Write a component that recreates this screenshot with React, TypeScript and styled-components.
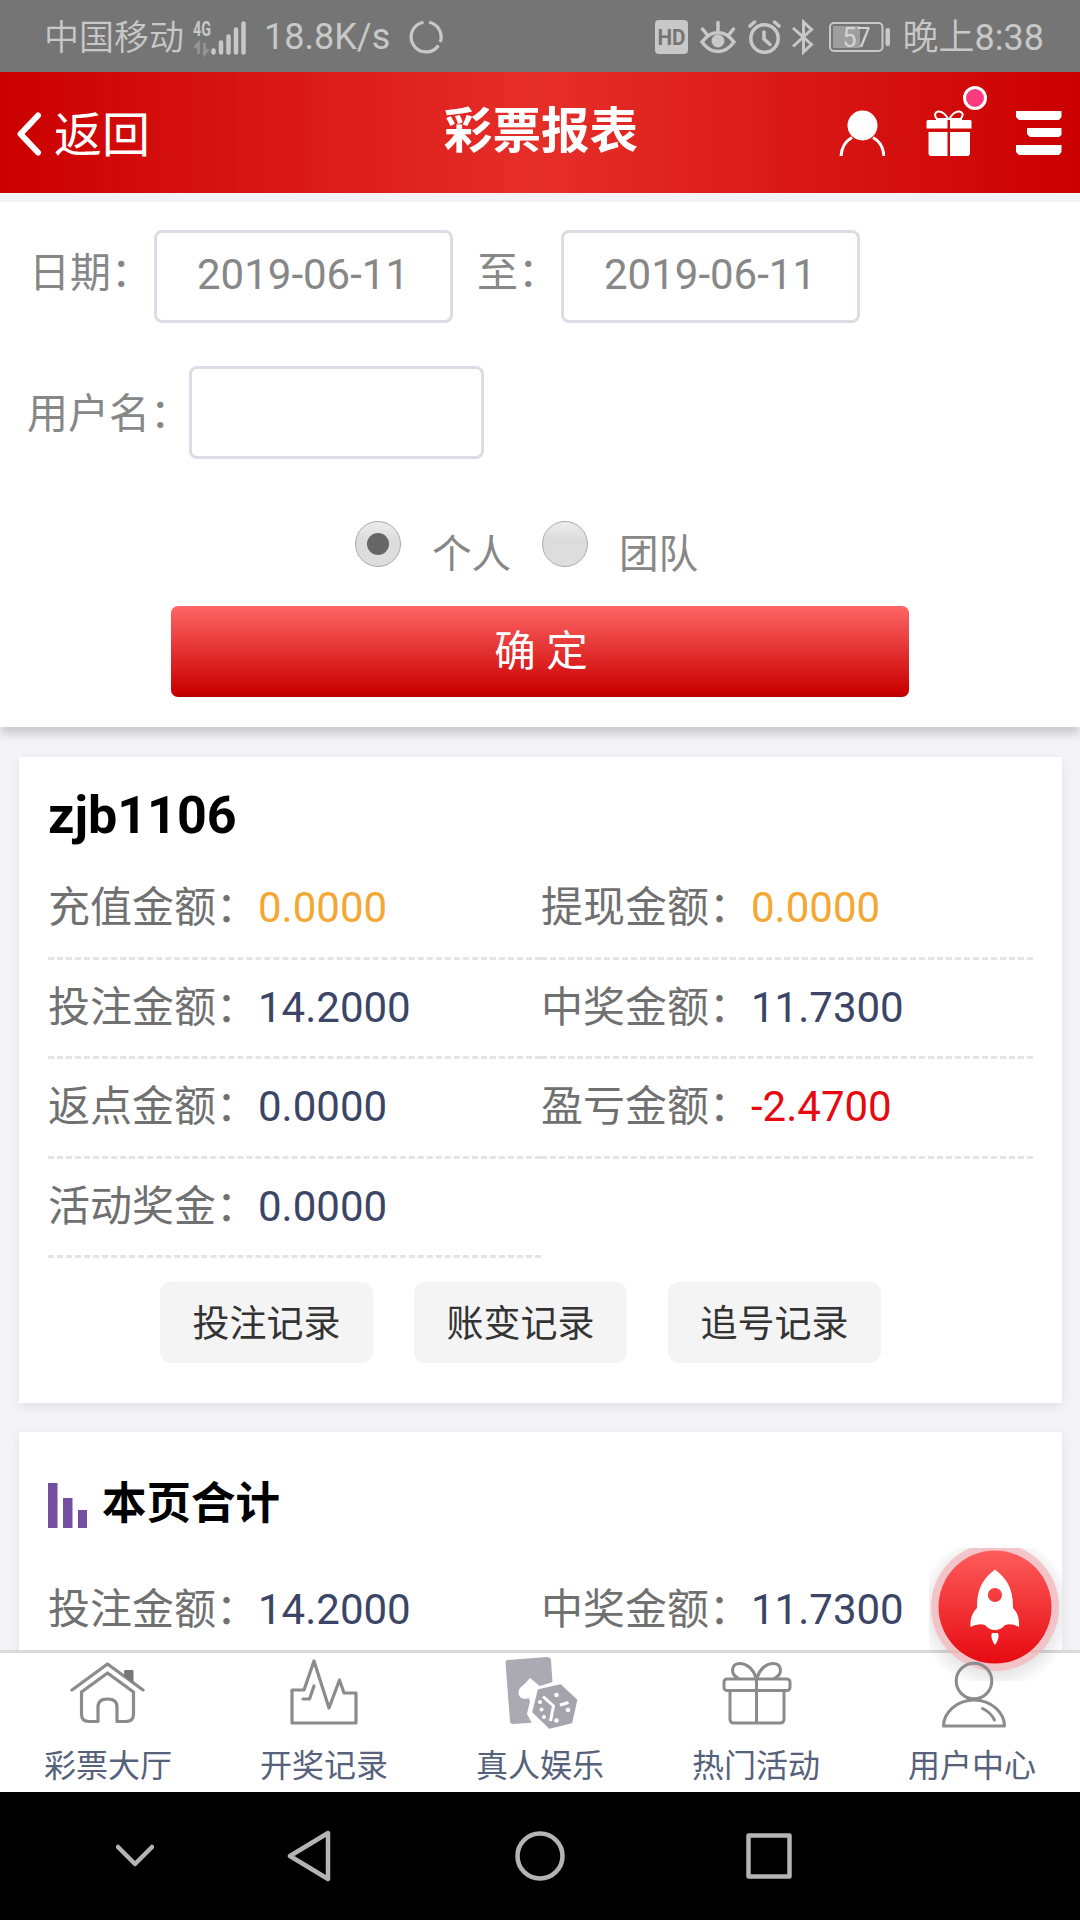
import React from "react";
import styled, { createGlobalStyle } from "styled-components";

const GlobalStyle = createGlobalStyle`
  * { box-sizing: border-box; }
  body { margin: 0; background: #f3f3f8; }
  button, input { font: inherit; }
`;

const Screen = styled.div`
  width: 1080px;
  height: 1920px;
  display: flex;
  flex-direction: column;
  overflow: hidden;
  background: #f3f3f8;
  font-family: Roboto, "Noto Sans CJK SC", sans-serif;
  color: #707070;
`;

/* ---------- status bar ---------- */
const StatusBar = styled.div`
  flex: none;
  height: 72px;
  padding: 3px 36px 0 44px;
  display: flex;
  align-items: center;
  justify-content: space-between;
  background: #757575;
  color: #c8c8c8;
  font-size: 36px;
  line-height: 69px;
`;
const StatusGroup = styled.div`
  display: flex;
  align-items: center;
`;
const Carrier = styled.span`
  padding-top: 2px;
  font-size: 35px;
  font-weight: 350;
`;
const Network = styled.div`
  width: 54px;
  height: 40px;
  margin-left: 8px;
  svg { display: block; }
`;
const Speed = styled.span`
  margin: 0 18px 0 18px;
`;
const StatusIcon = styled.svg<{ $gap?: number }>`
  display: block;
  margin-right: ${(p) => p.$gap ?? 12}px;
`;
const Clock = styled.span`
  padding-top: 1px;
`;
const ClockPeriod = styled.span`
  font-weight: 350;
`;

/* ---------- header ---------- */
const Header = styled.header`
  flex: none;
  height: 121px;
  display: grid;
  grid-template-columns: 1fr auto 1fr;
  align-items: center;
  padding: 0 18px 0 16px;
  background: linear-gradient(90deg, #cb0000 0%, #e62e29 50%, #cb0000 100%);
  color: #fff;
`;
const Back = styled.button`
  display: flex;
  align-items: center;
  gap: 10px;
  padding: 7px 0 0;
  border: 0;
  background: none;
  color: inherit;
  font-size: 48px;
  line-height: 60px;
  svg { margin-top: -4px; }
`;
const Title = styled.h1`
  margin: 0;
  padding: 0 0 2px 4px;
  font-size: 48.6px;
  line-height: 60px;
  font-weight: 700;
`;
const HeaderActions = styled.div`
  display: flex;
  justify-content: flex-end;
  gap: 41px;
`;
const GiftAction = styled.div`
  position: relative;
  display: flex;
  margin-right: 3px;
`;
const Badge = styled.span`
  position: absolute;
  left: 37px;
  top: -24px;
  width: 24px;
  height: 24px;
  border: 3px solid #fff;
  border-radius: 50%;
  background: #ff3b7f;
`;

/* ---------- filter ---------- */
const Filter = styled.section`
  flex: none;
  height: 525px;
  margin-top: 9px;
  padding-top: 28px;
  background: #fff;
  box-shadow: 0 7px 9px rgba(0, 0, 0, 0.17);
  color: #878787;
  font-size: 40px;
`;
const Field = styled.div<{ $indent: number; $gap: number }>`
  display: flex;
  align-items: center;
  height: 93px;
  padding-left: ${(p) => p.$indent}px;
  margin-bottom: ${(p) => p.$gap}px;
`;
const FieldLabel = styled.label<{ $width: number; $lift: number; $before?: number }>`
  width: ${(p) => p.$width}px;
  margin-left: ${(p) => p.$before ?? 0}px;
  padding-bottom: ${(p) => p.$lift}px;
  font-size: 41px;
  white-space: nowrap;
`;
const TextInput = styled.input<{ $width: number }>`
  width: ${(p) => p.$width}px;
  height: 93px;
  padding: 0 1px 5px 0;
  border: 3px solid #dadde5;
  border-radius: 8px;
  background: #fff;
  color: #878787;
  font-size: 42px;
  text-align: center;
  outline: none;
`;
const Scope = styled.div`
  display: flex;
  padding-left: 355px;
  height: 85px;
`;
const ScopeOption = styled.label<{ $width: number }>`
  display: flex;
  width: ${(p) => p.$width}px;
  line-height: 67px;
  font-size: 39.6px;
  white-space: nowrap;
`;
const Radio = styled.span<{ $on?: boolean }>`
  display: grid;
  place-items: center;
  width: 46px;
  height: 46px;
  margin-right: 31px;
  border: 1px solid #a9a9a9;
  border-radius: 50%;
  background: linear-gradient(#ececec, #dcdcdc 40%, #dedede);
  &::after {
    content: "";
    width: 22px;
    height: 22px;
    border-radius: 50%;
    background: ${(p) => (p.$on ? "#666" : "transparent")};
  }
`;
const Submit = styled.button`
  display: block;
  width: 738px;
  height: 91px;
  margin: 0 auto;
  padding: 0 0 8px 2px;
  border: 0;
  border-radius: 7px;
  background: linear-gradient(#ff6666, #ca0000 95%, #b40000);
  color: #fff;
  font-size: 41.5px;
`;

/* ---------- report cards ---------- */
const Reports = styled.main`
  flex: 1;
  min-height: 0;
  overflow: hidden;
  padding: 30px 18px 0 19px;
`;
const Card = styled.section<{ $height: number }>`
  height: ${(p) => p.$height}px;
  margin-bottom: 29px;
  padding: 30px 29px 0 29px;
  background: #fff;
  box-shadow: 0 4px 12px rgba(0, 0, 0, 0.08);
`;
const CardTitle = styled.h2<{ $size: number; $height: number; $after: number }>`
  display: flex;
  align-items: center;
  gap: 15px;
  height: ${(p) => p.$height}px;
  margin: 0 0 ${(p) => p.$after}px;
  color: #000;
  font-size: ${(p) => p.$size}px;
  line-height: 58px;
  font-weight: 700;
`;
const CardTitleText = styled.span`
  padding-bottom: 2px;
`;
const Stats = styled.dl`
  display: grid;
  grid-template-columns: 493px 492px;
  margin: 0;
`;
const Stat = styled.div`
  display: flex;
  height: 99.5px;
  border-bottom: 3px dashed #e4e4e4;
  font-size: 42px;
  line-height: 96px;
`;
const StatLabel = styled.dt`
  color: #707070;
`;
const StatValue = styled.dd<{ $color: string }>`
  margin: 0;
  color: ${(p) => p.$color};
`;
const RecordLinks = styled.div`
  display: flex;
  gap: 41px;
  padding: 24px 0 0 112px;
`;
const RecordLink = styled.button`
  width: 213px;
  height: 81px;
  padding: 0 0 4px;
  border: 0;
  border-radius: 11px;
  background: #f4f4f4;
  color: #333;
  font-size: 37px;
  white-space: nowrap;
`;

/* ---------- floating button and tab bar ---------- */
const Footer = styled.footer`
  flex: none;
  position: relative;
`;
const RocketButton = styled.div`
  position: absolute;
  z-index: 1;
  left: 929px;
  top: -102px;
  width: 133px;
  height: 133px;
  overflow: hidden;
  svg { display: block; }
`;
const TabBar = styled.nav`
  height: 142px;
  display: grid;
  grid-template-columns: repeat(5, 1fr);
  border-top: 3px solid #dadada;
  background: #fff;
`;
const Tab = styled.a`
  display: flex;
  flex-direction: column;
  align-items: center;
  color: #56617b;
  font-size: 32px;
  line-height: 40px;
  svg { display: block; position: relative; z-index: 2; }
`;
const TabLabel = styled.span`
  margin-top: 17px;
`;

const SystemNav = styled.div`
  flex: none;
  height: 128px;
  display: flex;
  align-items: center;
  padding-left: 116px;
  background: #000;
  svg { display: block; }
`;
const SystemKey = styled.svg<{ $gap: number }>`
  margin-right: ${(p) => p.$gap}px;
  fill: none;
  stroke: #b4b4b4;
  stroke-width: 4.5;
  stroke-linejoin: round;
  stroke-linecap: round;
`;

const line = { fill: "none", stroke: "#8b8b8b", strokeWidth: 3.2, strokeLinejoin: "round", strokeLinecap: "round" } as const;

const HouseIcon = () => (
  <svg width="76" height="76" viewBox="70 1653 76 76" {...line}>
    <path d="M72 1690 L107.500 1664 L143 1690" />
    <path d="M81.500 1692 L107.500 1673 L133.500 1692 V1714 Q133.500 1721.500 126 1721.500 H117 V1707 Q117 1699 107.500 1699 Q98 1699 98 1707 V1721.500 H89 Q81.500 1721.500 81.500 1714 Z" />
    <path d="M125 1670.500 h8 v11.500 l-8-6z" fill="#777" stroke="#777" strokeWidth="1" />
  </svg>
);
const TrendIcon = () => (
  <svg width="76" height="76" viewBox="286 1653 76 76" {...line}>
    <path d="M292 1723 V1690 H304 L314 1661 L329 1708 L339.500 1680 L344 1693 H356 V1723 Z" />
    <path d="M303 1699 H309.500 L314 1686" />
  </svg>
);
const CasinoIcon = () => (
  <svg width="76" height="76" viewBox="502 1653 76 76">
    <path d="M508 1660 L547 1657 Q550 1657 551 1660 L555 1721 L513 1724 Q510 1724 510 1721 L505.500 1663 Q505 1660 508 1660Z" fill="#abaab2" />
    <path d="M530 1678 L541 1687 L536 1705 L531 1703 L528.500 1698 Q524 1700 520.500 1697.500 Q516.500 1693 520 1688 Q526 1683 530 1678Z" fill="#fff" />
    <path d="M553 1682 H577 V1729 H535 L527 1714 L533 1688Z" fill="#fff" />
    <path d="M538.500 1690 L560.500 1685 L576.500 1700 L571.500 1722.500 L549.500 1728 L533 1712 Z" fill="#a5a4ac" stroke="#a5a4ac" strokeWidth="1.500" strokeLinejoin="round" />
    <path d="M543 1696.500 L553.500 1706 L550.500 1721 M560 1705 L568.500 1702.500" fill="none" stroke="#fff" strokeWidth="3" />
    <g fill="#fff">
      <circle cx="556.500" cy="1695" r="2.300" /><circle cx="568" cy="1710" r="2.300" /><circle cx="556.500" cy="1720.500" r="2.300" />
      <circle cx="540" cy="1702" r="2" /><circle cx="541.500" cy="1709.500" r="2" /><circle cx="544" cy="1717" r="2" />
    </g>
  </svg>
);
const GiftIcon = () => (
  <svg width="76" height="76" viewBox="719 1653 76 76" {...line} strokeWidth={3}>
    <rect x="725" y="1679" width="66" height="11.500" rx="3" />
    <path d="M731 1690.500 V1719 Q731 1723 735 1723 H781 Q785 1723 785 1719 V1690.500 M757.500 1678 V1723" />
    <path d="M757 1678 C754 1668 747 1663.500 741 1663.500 C732 1663.500 731 1674 739 1678 M758 1678 C761 1668 768 1663.500 774 1663.500 C783 1663.500 784 1674 776 1678" />
  </svg>
);
const UserIcon = () => (
  <svg width="76" height="76" viewBox="934.500 1653 76 76" {...line} strokeWidth={3}>
    <circle cx="974.500" cy="1681" r="17.800" />
    <path d="M944 1726 C944 1713 957 1700 974.500 1700 C992 1700 1005 1713 1005 1726 Z" />
    <path d="M983 1708.500 Q991 1712 995 1720" />
  </svg>
);

const tabs = [
  { label: "彩票大厅", Icon: HouseIcon },
  { label: "开奖记录", Icon: TrendIcon },
  { label: "真人娱乐", Icon: CasinoIcon },
  { label: "热门活动", Icon: GiftIcon },
  { label: "用户中心", Icon: UserIcon },
];

const NAVY = "#3b4566";
const ORANGE = "#f4a733";
const RED = "#e60a10";

const stats = [
  { label: "充值金额：", value: "0.0000", color: ORANGE },
  { label: "提现金额：", value: "0.0000", color: ORANGE },
  { label: "投注金额：", value: "14.2000", color: NAVY },
  { label: "中奖金额：", value: "11.7300", color: NAVY },
  { label: "返点金额：", value: "0.0000", color: NAVY },
  { label: "盈亏金额：", value: "-2.4700", color: RED },
  { label: "活动奖金：", value: "0.0000", color: NAVY },
];
const pageTotals = [stats[2], stats[3]];

const StatGrid = ({ items }: { items: typeof stats }) => (
  <Stats>
    {items.map((s) => (
      <Stat key={s.label}>
        <StatLabel>{s.label}</StatLabel>
        <StatValue $color={s.color}>{s.value}</StatValue>
      </Stat>
    ))}
  </Stats>
);

const SignalIcon = () => (
  <svg width="54" height="40" viewBox="191 16 54 40" overflow="visible">
    <text x="192" y="34" fontSize="20" fontWeight="700" fill="#c8c8c8" textLength="18" lengthAdjust="spacingAndGlyphs">4G</text>
    <path d="M197.500 52 V41 l-4 5 M203.500 41 V52 l4-5" stroke="#969696" strokeWidth="2.500" fill="none" />
    <path d="M212.500 50.500 v-2 M220 50.500 v-10 M227.500 50.500 v-16 M235 50.500 v-23 M242.500 50.500 v-29" stroke="#c8c8c8" strokeWidth="4.500" strokeLinecap="round" />
  </svg>
);

export default function App() {
  return (
    <>
      <GlobalStyle />
      <Screen>
        <StatusBar>
          <StatusGroup>
            <Carrier>中国移动</Carrier>
            <Network><SignalIcon /></Network>
            <Speed>18.8K/s</Speed>
            <StatusIcon width="36" height="38" viewBox="0 0 36 38" fill="none" stroke="#c8c8c8" strokeWidth="3.200">
              <path d="M21 3.300 A15 15 0 0 1 32.300 23 M30.500 26.500 A15 15 0 1 1 15.500 3.200" />
            </StatusIcon>
          </StatusGroup>
          <StatusGroup>
            <StatusIcon width="33" height="36" viewBox="0 0 33 36">
              <rect width="33" height="34" rx="4" fill="#c8c8c8" />
              <text x="2.500" y="25" fontSize="21.500" fontWeight="700" fill="#757575" textLength="28" lengthAdjust="spacingAndGlyphs">HD</text>
            </StatusIcon>
            <StatusIcon width="36" height="36" viewBox="0 0 36 36" fill="none" stroke="#c8c8c8" strokeWidth="3.500" strokeLinecap="round">
              <path d="M2 22 Q9 12.500 18 12.500 Q27 12.500 34 22 Q27 31.500 18 31.500 Q9 31.500 2 22Z M18 2.500 V11 M2.500 9 L6.500 14 M33.500 9 L29.500 14" />
              <circle cx="18" cy="21" r="6.500" fill="#c8c8c8" stroke="none" />
            </StatusIcon>
            <StatusIcon width="33" height="36" viewBox="0 0 33 36" fill="none" stroke="#c8c8c8" strokeWidth="3.500" strokeLinecap="round" $gap={11}>
              <circle cx="16.500" cy="18.500" r="13.700" />
              <path d="M16 12 V19 L22 24.500 M2 6 L6.500 2 M31 6 L26.500 2" />
            </StatusIcon>
            <StatusIcon width="22" height="38" viewBox="0 0 22 38" fill="none" stroke="#c8c8c8" strokeWidth="3" $gap={15}>
              <path d="M1 9 L19.500 25.500 L11.500 33 V3 L19.500 10.500 L1 27.500" />
            </StatusIcon>
            <StatusIcon width="62" height="32" viewBox="0 0 62 32" $gap={12}>
              <rect x="1" y="1" width="52.500" height="28" rx="4" fill="none" stroke="#c8c8c8" strokeWidth="2" />
              <rect x="4" y="4" width="27" height="22" fill="#9e9e9e" />
              <rect x="56.500" y="6" width="4.500" height="18" rx="2" fill="#c8c8c8" />
              <text x="13.500" y="24.500" fontSize="27" fill="#d4d4d4" textLength="28" lengthAdjust="spacingAndGlyphs">57</text>
            </StatusIcon>
            <Clock><ClockPeriod>晚上</ClockPeriod>8:38</Clock>
          </StatusGroup>
        </StatusBar>

        <Header>
          <Back>
            <svg width="28" height="46" viewBox="0 0 28 46" fill="none" stroke="#fff" strokeWidth="6" strokeLinecap="round" strokeLinejoin="round">
              <path d="M22 4.500 L4.500 23 L22 41.500" />
            </svg>
            返回
          </Back>
          <Title>彩票报表</Title>
          <HeaderActions>
            <svg width="46" height="46" viewBox="0 0 46 46">
              <circle cx="23.500" cy="15.500" r="15" fill="#fff" />
              <path d="M2 46 Q3 33 13 27.500 M45 46 Q44 33 34 27.500" fill="none" stroke="#fff" strokeWidth="3" />
            </svg>
            <GiftAction>
              <svg width="46" height="46" viewBox="0 0 46 46" fill="#fff">
                <path d="M1.500 10 H21.500 V18.500 H0.500 V11z M24 10 H44.500 L45.500 11 V18.500 H24z M2.500 22 H21.500 V46 H4 L2.500 44z M24 22 H44 V44 L42.500 46 H24z" />
                <path d="M22.500 9.500 Q18 1 12 1.500 Q7 3 10.500 8.500 M23 9.500 Q27.500 1 33.500 1.500 Q39 3 35 8.500 M10 9 H36" fill="none" stroke="#fff" strokeWidth="2" />
              </svg>
              <Badge />
            </GiftAction>
            <svg width="46" height="46" viewBox="0 0 46 46" fill="#fff">
              <path d="M0 1 H45.500 V7 L43 10 H3 L0 7z M11 18 H45.500 V25 L43 27 H14 L11 24z M0 35 H45.500 V42 L43 45 H3 L0 42z" />
            </svg>
          </HeaderActions>
        </Header>

        <Filter>
          <Field $indent={29} $gap={43}>
            <FieldLabel $width={125} $lift={16}>日期：</FieldLabel>
            <TextInput $width={299} defaultValue="2019-06-11" />
            <FieldLabel $width={84} $lift={16} $before={24}>至：</FieldLabel>
            <TextInput $width={299} defaultValue="2019-06-11" />
          </Field>
          <Field $indent={27} $gap={62}>
            <FieldLabel $width={162} $lift={6}>用户名：</FieldLabel>
            <TextInput $width={295} defaultValue="" />
          </Field>
          <Scope>
            <ScopeOption $width={187}><Radio $on />个人</ScopeOption>
            <ScopeOption $width={187}><Radio />团队</ScopeOption>
          </Scope>
          <Submit>确 定</Submit>
        </Filter>

        <Reports>
          <Card $height={646}>
            <CardTitle $size={52} $height={57} $after={16}>zjb1106</CardTitle>
            <StatGrid items={stats} />
            <RecordLinks>
              <RecordLink>投注记录</RecordLink>
              <RecordLink>账变记录</RecordLink>
              <RecordLink>追号记录</RecordLink>
            </RecordLinks>
          </Card>
          <Card $height={400}>
            <CardTitle $size={44.5} $height={86} $after={14}>
              <svg width="39" height="45" viewBox="0 0 39 45" fill="#744fa0">
                <path d="M0 0h9.500v45H0z M15 15h9.500v30H15z M30 27h9v18h-9z" />
              </svg>
              <CardTitleText>本页合计</CardTitleText>
            </CardTitle>
            <StatGrid items={pageTotals} />
          </Card>
        </Reports>

        <Footer>
          <RocketButton>
            <svg width="133" height="133" viewBox="929 1548 133 133">
              <defs>
                <linearGradient id="rocketFill" x1="0" y1="0" x2="0" y2="1">
                  <stop offset="0" stopColor="#ff5c5c" />
                  <stop offset="1" stopColor="#e60a10" />
                </linearGradient>
                <radialGradient id="rocketGlow">
                  <stop offset="0.780" stopColor="#000" stopOpacity="0.090" />
                  <stop offset="1" stopColor="#000" stopOpacity="0" />
                </radialGradient>
              </defs>
              <circle cx="995" cy="1612" r="78" fill="url(#rocketGlow)" />
              <circle cx="995" cy="1607" r="64" fill="#f7b4b8" fillOpacity="0.700" />
              <circle cx="995" cy="1607" r="56.500" fill="url(#rocketFill)" />
              <path fillRule="evenodd" fill="#fff" d="M995 1569.500 C984 1578 976.500 1588 977 1608 C972 1613 970 1619 970.500 1627 Q978 1623 985 1625 Q989 1630 995 1630 Q1001 1630 1005 1625 Q1012 1623 1019 1627 C1019.500 1619 1018 1613 1013 1608 C1013.500 1588 1006 1578 995 1569.500Z M995 1588 a7 7 0 1 1 -0.100 0Z M992 1633 H998 Q1000 1638 995 1645 Q990 1638 992 1633Z" />
            </svg>
          </RocketButton>
          <TabBar>
            {tabs.map(({ label, Icon }) => (
              <Tab key={label}>
                <Icon />
                <TabLabel>{label}</TabLabel>
              </Tab>
            ))}
          </TabBar>
        </Footer>

        <SystemNav>
          <SystemKey width="38" height="50" viewBox="0 0 38 50" $gap={133}><path d="M2 16 L19 33 L36 16" /></SystemKey>
          <SystemKey width="44" height="52" viewBox="0 0 44 52" $gap={184}><path d="M41 3 V49 L3 26 Z" /></SystemKey>
          <SystemKey width="50" height="50" viewBox="0 0 50 50" $gap={181}><circle cx="25" cy="25" r="22.500" /></SystemKey>
          <SystemKey width="46" height="46" viewBox="0 0 46 46" $gap={0}><rect x="2.500" y="2.500" width="41" height="41" /></SystemKey>
        </SystemNav>
      </Screen>
    </>
  );
}
